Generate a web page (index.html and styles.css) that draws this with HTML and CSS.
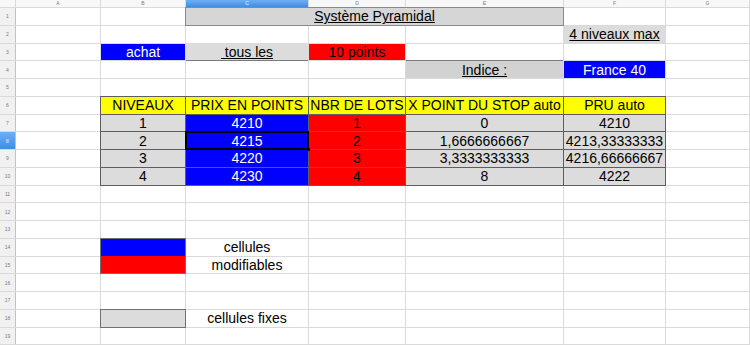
FILE: index.html
```html
<!doctype html>
<html>
<head>
    <meta charset="utf-8">
    <title>Système Pyramidal</title>
    <link rel="stylesheet" href="styles.css">
</head>
<body>
    <table class="sheet">
        <colgroup>
            <col class="w-hd"><col class="w-a"><col class="w-b"><col class="w-c"><col class="w-d"><col class="w-e"><col class="w-f"><col class="w-g">
        </colgroup>
        <tr class="heads">
            <th></th><th>A</th><th>B</th><th class="active">C</th><th>D</th><th>E</th><th>F</th><th>G</th>
        </tr>
        <tr>
            <th>1</th><td></td><td></td>
            <td colspan="3" class="fixe titre souligne">Système Pyramidal</td>
            <td></td><td></td>
        </tr>
        <tr>
            <th>2</th><td></td><td></td><td></td><td></td><td></td>
            <td class="fixe souligne">4 niveaux max</td>
            <td></td>
        </tr>
        <tr>
            <th>3</th><td></td>
            <td class="bleu">achat</td>
            <td class="fixe souligne bas">&nbsp;tous les</td>
            <td class="rouge">10 points</td>
            <td></td><td></td><td></td>
        </tr>
        <tr>
            <th>4</th><td></td><td></td><td></td><td></td>
            <td class="fixe souligne haut">Indice :</td>
            <td class="bleu">France 40</td>
            <td></td>
        </tr>
        <tr><th>5</th><td></td><td></td><td></td><td></td><td></td><td></td><td></td></tr>
        <tr>
            <th>6</th><td></td>
            <td class="jaune cadre">NIVEAUX</td>
            <td class="jaune cadre">PRIX EN POINTS</td>
            <td class="jaune cadre">NBR DE LOTS</td>
            <td class="jaune cadre">X POINT DU STOP auto</td>
            <td class="jaune cadre">PRU auto</td>
            <td></td>
        </tr>
        <tr>
            <th>7</th><td></td>
            <td class="fixe cadre">1</td>
            <td class="bleu cadre">4210</td>
            <td class="rouge cadre">1</td>
            <td class="fixe cadre">0</td>
            <td class="fixe cadre">4210</td>
            <td></td>
        </tr>
        <tr>
            <th class="active">8</th><td></td>
            <td class="fixe cadre">2</td>
            <td class="bleu cadre sel">4215</td>
            <td class="rouge cadre">2</td>
            <td class="fixe cadre">1,6666666667</td>
            <td class="fixe cadre">4213,33333333</td>
            <td></td>
        </tr>
        <tr>
            <th>9</th><td></td>
            <td class="fixe cadre">3</td>
            <td class="bleu cadre">4220</td>
            <td class="rouge cadre">3</td>
            <td class="fixe cadre">3,3333333333</td>
            <td class="fixe cadre">4216,66666667</td>
            <td></td>
        </tr>
        <tr>
            <th>10</th><td></td>
            <td class="fixe cadre">4</td>
            <td class="bleu cadre">4230</td>
            <td class="rouge cadre">4</td>
            <td class="fixe cadre">8</td>
            <td class="fixe cadre">4222</td>
            <td></td>
        </tr>
        <tr><th>11</th><td></td><td></td><td></td><td></td><td></td><td></td><td></td></tr>
        <tr><th>12</th><td></td><td></td><td></td><td></td><td></td><td></td><td></td></tr>
        <tr><th>13</th><td></td><td></td><td></td><td></td><td></td><td></td><td></td></tr>
        <tr>
            <th>14</th><td></td>
            <td rowspan="2" class="legende cadre-clair"></td>
            <td>cellules</td>
            <td></td><td></td><td></td><td></td>
        </tr>
        <tr>
            <th>15</th><td></td>
            <td>modifiables</td>
            <td></td><td></td><td></td><td></td>
        </tr>
        <tr><th>16</th><td></td><td></td><td></td><td></td><td></td><td></td><td></td></tr>
        <tr><th>17</th><td></td><td></td><td></td><td></td><td></td><td></td><td></td></tr>
        <tr>
            <th>18</th><td></td>
            <td class="fixe cadre-clair"></td>
            <td>cellules fixes</td>
            <td></td><td></td><td></td><td></td>
        </tr>
        <tr><th>19</th><td></td><td></td><td></td><td></td><td></td><td></td><td></td></tr>
    </table>
</body>
</html>
```

FILE: styles.css
```css
html, body {
    margin: 0;
    height: 100%;
    overflow: hidden;
    background: #fff;
    font-family: "Liberation Sans", Arial, sans-serif;
}

/* the grid lines are the table background showing through the spacing */
.sheet {
    table-layout: fixed;
    width: 751px;
    margin: -1px 0 0 -1px;
    border-collapse: separate;
    border-spacing: 1px;
    background: #dadada;
    font-size: 14px;
}

.w-hd { width: 15px; }
.w-a  { width: 84px; }
.w-b  { width: 84px; }
.w-c  { width: 122px; }
.w-d  { width: 96px; }
.w-e  { width: 157px; }
.w-f  { width: 101px; }
.w-g  { width: 83px; }

.sheet td,
.sheet th {
    padding: 0;
    height: 16.75px;
    line-height: 16px;
    text-align: center;
    white-space: nowrap;
}

.sheet td {
    background: #fff;
    color: #000;
}

/* row and column headers */
.sheet th {
    background: #f1f1f1;
    color: #7a7a7a;
    font-size: 5px;
    font-weight: normal;
    box-shadow: 1px 0 0 #c2c2c2;
}

.sheet .heads th {
    height: 7px;
    line-height: 7px;
    background: #f8f8f8;
    box-shadow: none;
}

.sheet th.active,
.sheet .heads th.active {
    background: linear-gradient(#6cb0f6, #3f8de8);
    color: #e8f2ff;
}

/* cell formats */
.fixe   { background: #dcdcdc !important; }
.titre  { background: #d6d6d6 !important; outline: 1px solid #8a8a8a; }
.bleu   { background: #0000ff !important; color: #fff !important; }
.rouge  { background: #ff0000 !important; }
.jaune  { background: #ffff00 !important; }

.souligne { text-decoration: underline; }
.bas      { box-shadow: 0 1px 0 #7a7a7a; }
.haut     { box-shadow: 0 -1px 0 #7a7a7a; background: #d2d2d2 !important; }

.cadre       { outline: 1px solid #5e5e5e; }
.cadre-clair { outline: 1px solid #707070; }

.legende {
    background: linear-gradient(#0000ff 50%, #ff0000 50%) !important;
}

/* current cell with its fill handle */
.sel {
    position: relative;
    outline: 2px solid #000;
    outline-offset: -1px;
}

.sel::after {
    content: "";
    position: absolute;
    right: -2px;
    bottom: -2px;
    width: 3px;
    height: 3px;
    background: #000;
}
```
